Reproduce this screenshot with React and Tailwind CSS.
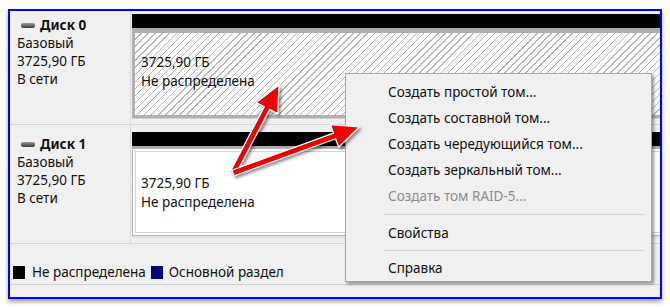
import React from "react";

const font = { fontFamily: '"Noto Sans", "Open Sans", sans-serif' };

function arrowPoints(x1, y1, x2, y2, shaftW = 6, headL = 26, headW = 24) {
  const dx = x2 - x1;
  const dy = y2 - y1;
  const len = Math.hypot(dx, dy);
  const ux = dx / len;
  const uy = dy / len;
  const px = -uy;
  const py = ux;
  const bx = x2 - ux * headL;
  const by = y2 - uy * headL;
  const pts = [
    [x1 + px * shaftW / 2, y1 + py * shaftW / 2],
    [bx + px * shaftW / 2, by + py * shaftW / 2],
    [bx + px * headW / 2, by + py * headW / 2],
    [x2, y2],
    [bx - px * headW / 2, by - py * headW / 2],
    [bx - px * shaftW / 2, by - py * shaftW / 2],
    [x1 - px * shaftW / 2, y1 - py * shaftW / 2],
  ];
  return pts.map((p) => p.map((v) => v.toFixed(1)).join(",")).join(" ");
}

function DiskIcon() {
  return <div className="h-[5px] w-[14px] rounded-[2px] bg-gradient-to-b from-[#9a9a9a] to-[#3c3c3c]" />;
}

function DiskInfo({ name, top }) {
  return (
    <div className={`w-[121px] shrink-0 border-r border-[#dadada] pl-[7px] text-[13.5px] leading-[18px] text-[#111] ${top}`}>
      <div className="flex items-center gap-[5px] pl-[4px] font-bold">
        <DiskIcon />
        <span>{name}</span>
      </div>
      <div>Базовый</div>
      <div>3725,90 ГБ</div>
      <div>В сети</div>
    </div>
  );
}

function MenuItem({ children, disabled }) {
  return (
    <div className={`flex h-[26px] items-center pl-[42px] ${disabled ? "text-[#8c8c8c]" : "text-[#111]"}`}>
      {children}
    </div>
  );
}

function Separator({ h }) {
  return (
    <div className={`flex ${h} items-center pl-[37px] pr-[6px]`}>
      <div className="h-px w-full bg-[#d5d5d5]" />
    </div>
  );
}

export default function App() {
  return (
    <div className="relative h-[307px] w-[670px] overflow-hidden bg-white pl-[8px] pt-[9px]" style={font}>
      <div className="relative h-[290px] w-[654px] border-2 border-[#0000ff] bg-[#f0f0f0] shadow-[0_3px_4px_rgba(0,0,0,0.35)]">
        {/* Disk 0 */}
        <div className="flex h-[114px] border-b border-[#d6d6d6]">
          <DiskInfo name="Диск 0" top="pt-[5px]" />
          <div className="flex flex-1 flex-col pl-[1px] pt-[3px]">
            <div className="h-[14px] bg-black" />
            <div className="h-[2px] bg-[#a8a8a8]" />
            <div className="h-[88px] border-[3px] border-r-0 border-[#b0b0b0] bg-[repeating-linear-gradient(135deg,#ffffff_0px,#ffffff_4px,#b8b8b8_4px,#b8b8b8_5px)] pl-[6px] pt-[20px] text-[13.5px] leading-[19px] text-[#111]">
              <div>3725,90 ГБ</div>
              <div>Не распределена</div>
            </div>
            <div className="h-px bg-[#cfcfcf]" />
          </div>
        </div>

        {/* Disk 1 */}
        <div className="flex h-[119px] border-b border-[#d6d6d6]">
          <DiskInfo name="Диск 1" top="pt-[10px]" />
          <div className="flex flex-1 flex-col pl-[1px] pt-[7px]">
            <div className="h-[14px] bg-black" />
            <div className="h-[2px] bg-[#a8a8a8]" />
            <div className="h-[88px] border border-r-0 border-[#b4b4b4] bg-white p-[2px] pr-0">
              <div className="h-full border border-r-0 border-[#d4d4d4] pl-[5px] pt-[22px] text-[13.5px] leading-[19px] text-[#111]">
                <div>3725,90 ГБ</div>
                <div>Не распределена</div>
              </div>
            </div>
            <div className="h-[3px] bg-[#e4e4e4]" />
          </div>
        </div>

        {/* Legend */}
        <div className="flex h-[41px] items-center border-b border-[#cfcfcf] pl-[3px] pt-[17px] text-[13.5px] text-[#111]">
          <div className="h-[13px] w-[12px] bg-black" />
          <span className="ml-[7px]">Не распределена</span>
          <div className="ml-[5px] h-[13px] w-[12px] bg-[#000080]" />
          <span className="ml-[6px]">Основной раздел</span>
        </div>

        {/* Context menu */}
        <div className="absolute left-[335px] top-[62px] h-[209px] w-[307px] border border-[#a6a6a6] bg-[#f0f0f0] pt-[5px] text-[13.5px] shadow-[2px_2px_3px_rgba(0,0,0,0.4)]">
          <MenuItem>Создать простой том...</MenuItem>
          <MenuItem>Создать составной том...</MenuItem>
          <MenuItem>Создать чередующийся том...</MenuItem>
          <MenuItem>Создать зеркальный том...</MenuItem>
          <MenuItem disabled>Создать том RAID-5...</MenuItem>
          <Separator h="h-[11px]" />
          <MenuItem>Свойства</MenuItem>
          <Separator h="h-[9px]" />
          <MenuItem>Справка</MenuItem>
        </div>
      </div>

      {/* Red arrows */}
      <svg className="pointer-events-none absolute left-0 top-0" width="670" height="307">
        <defs>
          <filter id="sh" x="-20%" y="-20%" width="140%" height="140%">
            <feDropShadow dx="2" dy="2" stdDeviation="1.5" floodColor="#000" floodOpacity="0.45" />
          </filter>
        </defs>
        <g filter="url(#sh)" fill="#ee0000" stroke="#ffffff" strokeWidth="1.2" strokeLinejoin="round">
          <polygon points={arrowPoints(233, 173, 279, 85)} />
          <polygon points={arrowPoints(233, 173, 359, 127)} />
        </g>
      </svg>
    </div>
  );
}
